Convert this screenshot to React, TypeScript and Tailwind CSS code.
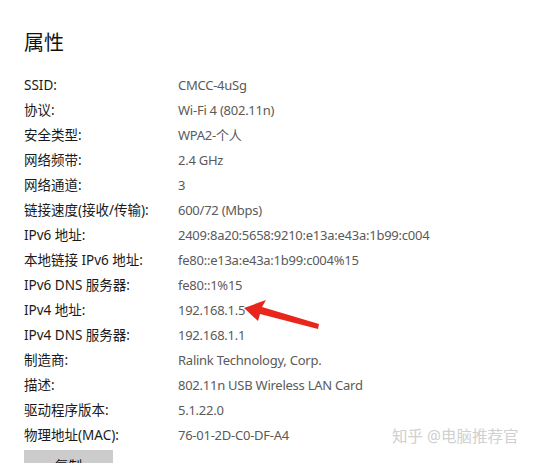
import React from "react";

const rows: [string, string][] = [
  ["SSID:", "CMCC-4uSg"],
  ["协议:", "Wi-Fi 4 (802.11n)"],
  ["安全类型:", "WPA2-个人"],
  ["网络频带:", "2.4 GHz"],
  ["网络通道:", "3"],
  ["链接速度(接收/传输):", "600/72 (Mbps)"],
  ["IPv6 地址:", "2409:8a20:5658:9210:e13a:e43a:1b99:c004"],
  ["本地链接 IPv6 地址:", "fe80::e13a:e43a:1b99:c004%15"],
  ["IPv6 DNS 服务器:", "fe80::1%15"],
  ["IPv4 地址:", "192.168.1.5"],
  ["IPv4 DNS 服务器:", "192.168.1.1"],
  ["制造商:", "Ralink Technology, Corp."],
  ["描述:", "802.11n USB Wireless LAN Card"],
  ["驱动程序版本:", "5.1.22.0"],
  ["物理地址(MAC):", "76-01-2D-C0-DF-A4"],
];

export default function App() {
  return (
    <div
      className="relative w-[534px] h-[463px] overflow-hidden bg-white pl-6 pt-[29px]"
      style={{ fontFamily: '"Noto Sans", "Noto Sans CJK SC", sans-serif' }}
    >
      <div className="text-[20px] leading-[28px] text-[#111]">属性</div>
      <div className="mt-[16px] flex flex-col">
        {rows.map(([k, v]) => (
          <div key={k} className="flex h-[25px] items-center text-[13.5px]">
            <div className="w-[154px] text-[#1a1a1a]">{k}</div>
            <div className="text-[13px] tracking-[-0.25px] text-[#5a5a5a]">{v}</div>
          </div>
        ))}
      </div>
      <div className="mt-[2px] flex h-[32px] w-[89px] items-center justify-center bg-[#cccccc] text-[13.5px] text-[#111]">
        复制
      </div>
      <svg
        className="absolute left-[241px] top-[299px]"
        width="84"
        height="36"
        viewBox="0 0 84 36"
      >
        <polygon points="3,9 25,1 21,8 78,25 77,30 19,15 17,22" fill="#e8261c" />
      </svg>
      <div className="absolute left-[392px] top-[425px] text-[15.5px] leading-[22px] text-[#d0d0d0]">
        知乎 @电脑推荐官
      </div>
    </div>
  );
}
